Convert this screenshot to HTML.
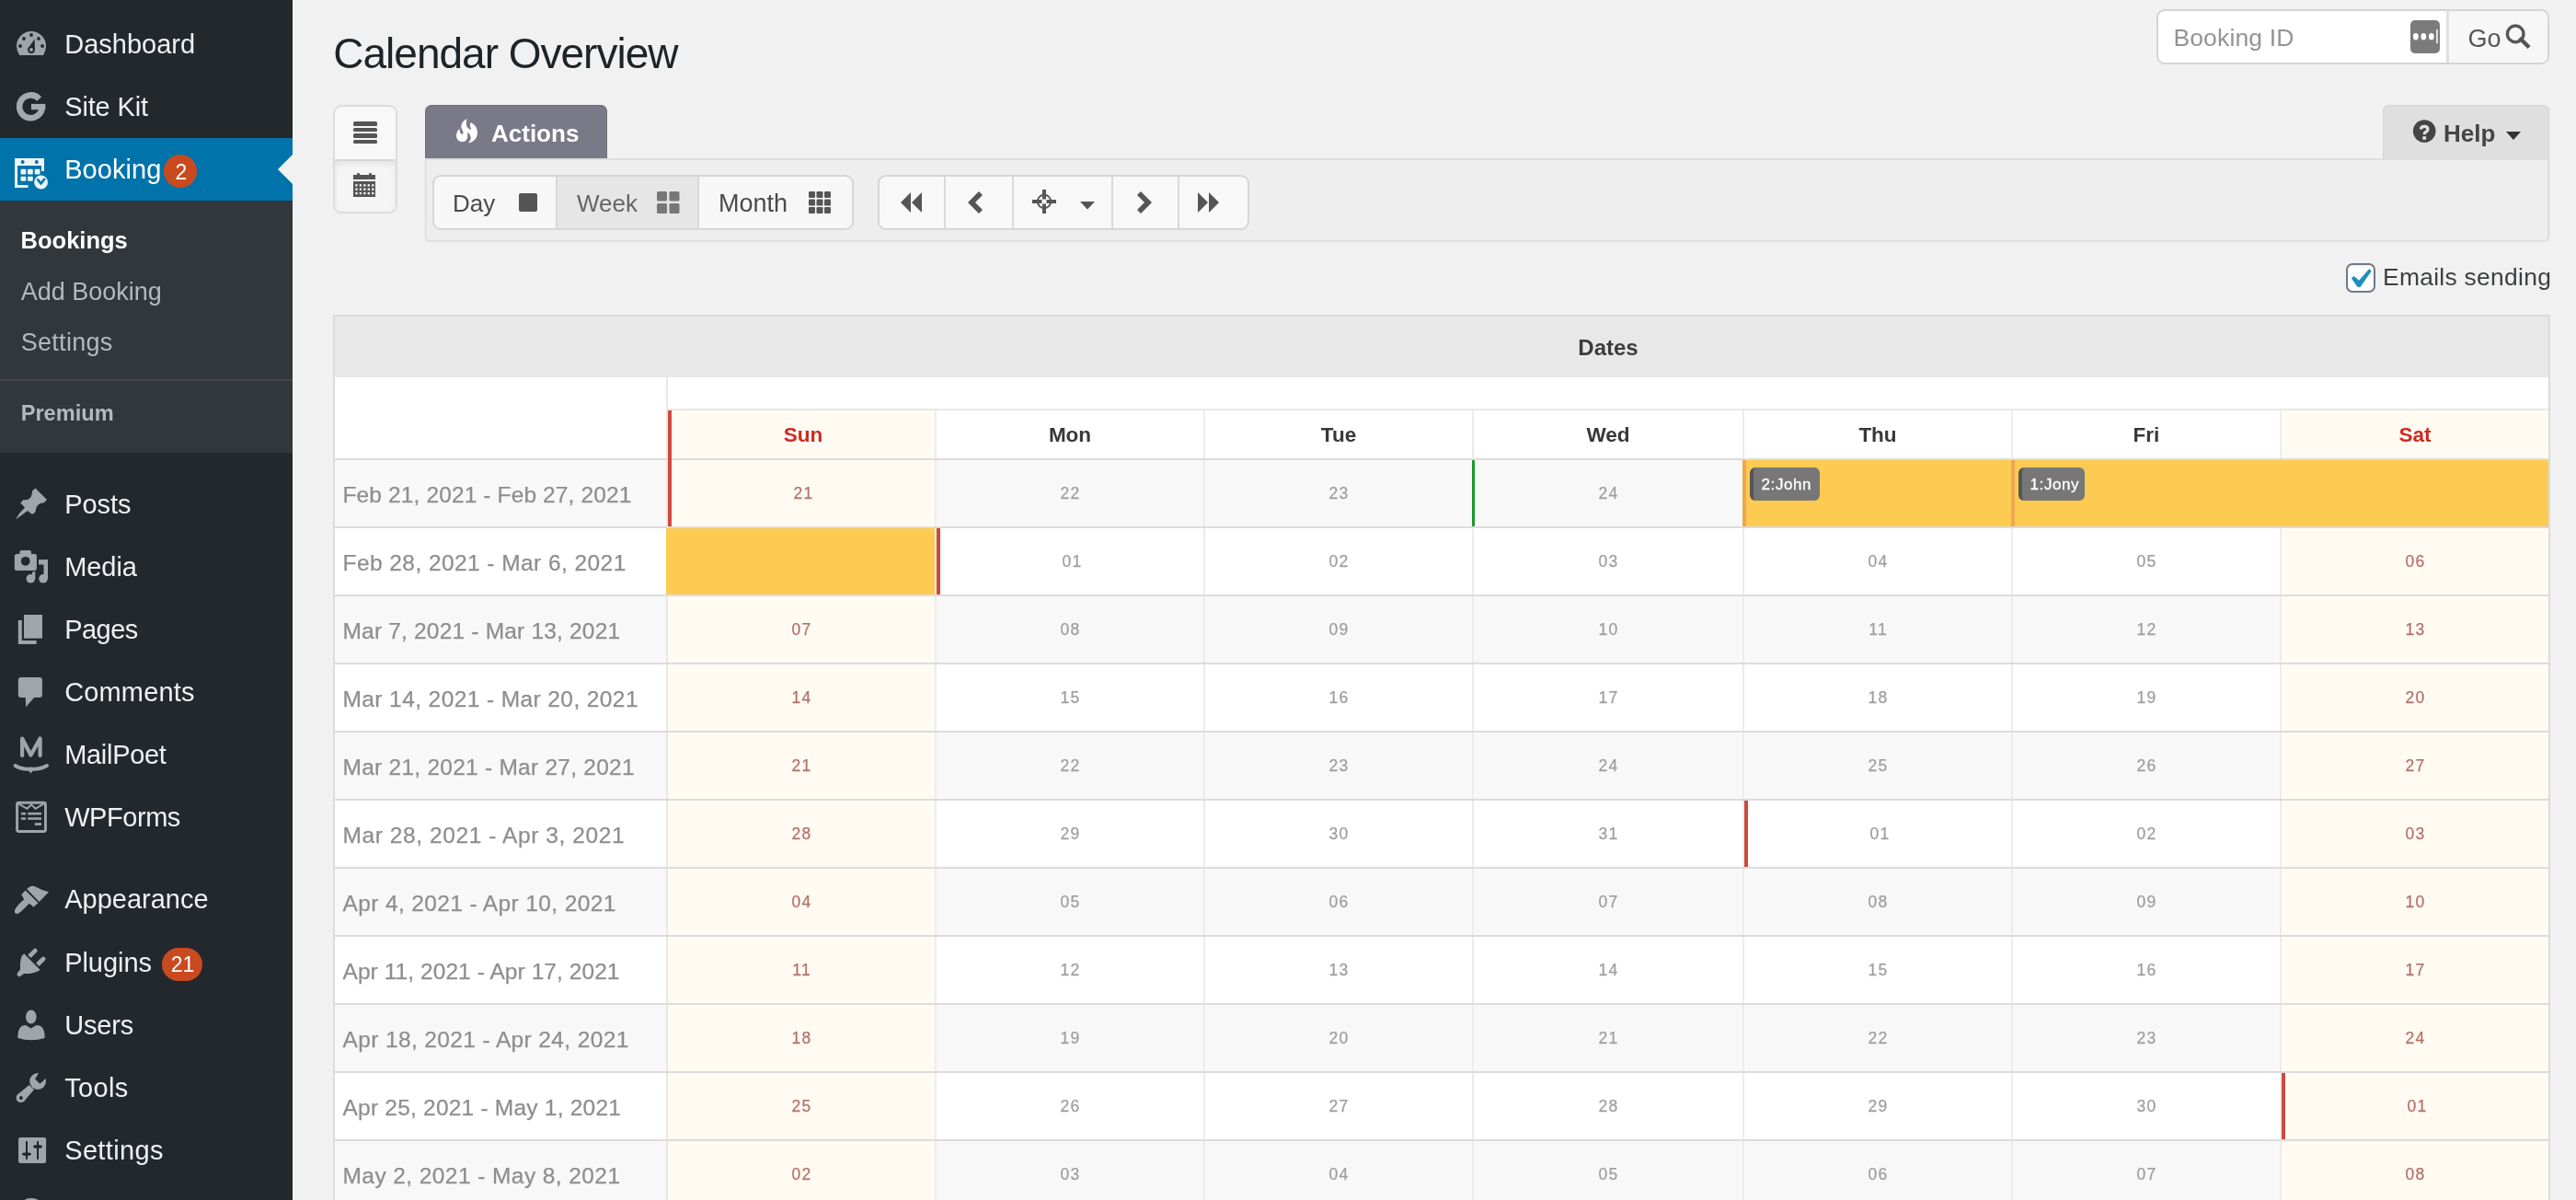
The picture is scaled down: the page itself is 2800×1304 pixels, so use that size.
<!DOCTYPE html>
<html><head><meta charset="utf-8"><style>
html,body{margin:0;padding:0;width:2800px;height:1304px;overflow:hidden;background:#f1f1f1;font-family:"Liberation Sans", sans-serif;}
.r{position:absolute;}
.t{position:absolute;white-space:nowrap;}
</style></head><body><div id="wrap" style="position:absolute;left:0;top:0;width:2800px;height:1304px;will-change:transform">
<div class="r" style="left:0px;top:0px;width:318px;height:1304px;background:#23282d"></div>
<div class="r" style="left:0px;top:150px;width:318px;height:68px;background:#0073aa"></div>
<div class="r" style="left:0px;top:218px;width:318px;height:274px;background:#32373c"></div>
<div class="r" style="left:0px;top:412px;width:318px;height:2px;background:#474545"></div>
<svg class="r" style="left:302px;top:168px" width="16" height="32"><path d="M16 0 L0 16 L16 32 Z" fill="#f1f1f1"/></svg>
<div class="t" style="left:70.2px;top:34.15px;font-size:29px;line-height:29px;color:#f0f0f1;font-weight:400;letter-spacing:0.00px">Dashboard</div>
<div class="t" style="left:70.2px;top:102.15px;font-size:29px;line-height:29px;color:#f0f0f1;font-weight:400;letter-spacing:-0.15px">Site Kit</div>
<div class="t" style="left:70.2px;top:170.15px;font-size:29px;line-height:29px;color:#fff;font-weight:400;letter-spacing:0.05px">Booking</div>
<div class="t" style="left:70.2px;top:534.15px;font-size:29px;line-height:29px;color:#f0f0f1;font-weight:400;letter-spacing:-0.05px">Posts</div>
<div class="t" style="left:70.2px;top:602.15px;font-size:29px;line-height:29px;color:#f0f0f1;font-weight:400;letter-spacing:-0.05px">Media</div>
<div class="t" style="left:70.2px;top:670.15px;font-size:29px;line-height:29px;color:#f0f0f1;font-weight:400;letter-spacing:-0.55px">Pages</div>
<div class="t" style="left:70.2px;top:738.15px;font-size:29px;line-height:29px;color:#f0f0f1;font-weight:400;letter-spacing:0.15px">Comments</div>
<div class="t" style="left:70.2px;top:806.15px;font-size:29px;line-height:29px;color:#f0f0f1;font-weight:400;letter-spacing:-0.30px">MailPoet</div>
<div class="t" style="left:70.2px;top:874.15px;font-size:29px;line-height:29px;color:#f0f0f1;font-weight:400;letter-spacing:-0.45px">WPForms</div>
<div class="t" style="left:70.2px;top:963.15px;font-size:29px;line-height:29px;color:#f0f0f1;font-weight:400;letter-spacing:0.00px">Appearance</div>
<div class="t" style="left:70.2px;top:1031.65px;font-size:29px;line-height:29px;color:#f0f0f1;font-weight:400;letter-spacing:-0.05px">Plugins</div>
<div class="t" style="left:70.2px;top:1099.65px;font-size:29px;line-height:29px;color:#f0f0f1;font-weight:400;letter-spacing:-0.15px">Users</div>
<div class="t" style="left:70.2px;top:1167.65px;font-size:29px;line-height:29px;color:#f0f0f1;font-weight:400;letter-spacing:0.35px">Tools</div>
<div class="t" style="left:70.2px;top:1235.65px;font-size:29px;line-height:29px;color:#f0f0f1;font-weight:400;letter-spacing:0.35px">Settings</div>
<div class="r" style="left:178px;top:168px;width:36px;height:36px;background:#ca4a1f;border-radius:18px"></div>
<div class="t" style="left:178.80px;width:36px;text-align:center;top:175.53px;font-size:23px;line-height:23px;color:#fff;font-weight:400;">2</div>
<div class="r" style="left:176px;top:1030px;width:44px;height:36px;background:#ca4a1f;border-radius:18px"></div>
<div class="t" style="left:176.50px;width:44px;text-align:center;top:1036.73px;font-size:23px;line-height:23px;color:#fff;font-weight:400;">21</div>
<div class="t" style="left:22.6px;top:249.41px;font-size:25.5px;line-height:25.5px;color:#fff;font-weight:700;">Bookings</div>
<div class="t" style="left:22.7px;top:303.54px;font-size:27px;line-height:27px;color:#b4b9be;font-weight:400;">Add Booking</div>
<div class="t" style="left:22.7px;top:359.34px;font-size:27px;line-height:27px;color:#b4b9be;font-weight:400;letter-spacing:0.3px">Settings</div>
<div class="t" style="left:22.7px;top:438.02px;font-size:23.6px;line-height:23.6px;color:#b4b9be;font-weight:700;">Premium</div>
<svg class="r" style="left:18px;top:34px" width="32" height="26" viewBox="0 0 32 26"><path d="M16 0 A16 16 0 0 1 32 16 Q32 21 29 26 L3.2 26 Q0 21 0 16 A16 16 0 0 1 16 0Z" fill="#a0a5aa"/><circle cx="16" cy="4" r="1.9" fill="#23282d"/><circle cx="8" cy="8" r="1.9" fill="#23282d"/><circle cx="24" cy="8" r="1.9" fill="#23282d"/><circle cx="4" cy="16" r="1.9" fill="#23282d"/><circle cx="28" cy="16" r="1.9" fill="#23282d"/><path d="M12.3 19.2 L19.6 8.3 L19.9 20.5 Z" fill="#23282d"/><circle cx="16" cy="20" r="3.9" fill="#23282d"/><circle cx="16" cy="20" r="1.9" fill="#a0a5aa"/></svg>
<svg class="r" style="left:18px;top:100px" width="32" height="32" viewBox="0 0 32 32"><path d="M24.7 7.5 A12.4 12.4 0 1 0 27.9 15.8" fill="none" stroke="#a7aaad" stroke-width="6.6"/><rect x="16" y="12.9" width="15.3" height="6.3" fill="#a7aaad"/></svg>
<svg class="r" style="left:15px;top:171px" width="38" height="36" viewBox="0 0 38 36"><g opacity="0.93"><path d="M1 1 H33 V15 H30 V9 H4 V30 H15.5 V33 H1 Z" fill="#fff"/><circle cx="9.6" cy="5" r="2" fill="#0073aa"/><circle cx="24.8" cy="5" r="2" fill="#0073aa"/><rect x="7.5" y="12.8" width="5.8" height="5.8" rx="1" fill="#fff"/><rect x="15" y="12.8" width="5.8" height="5.8" rx="1" fill="#fff"/><rect x="22.7" y="12.8" width="5.8" height="5.8" rx="1" fill="#fff"/><rect x="7.5" y="20.7" width="5.8" height="5" rx="1" fill="#fff"/><rect x="15" y="20.7" width="5.8" height="5" rx="1" fill="#fff"/><circle cx="29.6" cy="27" r="7.4" fill="#fff"/><path d="M25.5 23.5 L29.5 28.5 L33.8 23" fill="none" stroke="#0073aa" stroke-width="2.6"/></g></svg>
<svg class="r" style="left:0px;top:520px" width="60" height="50" viewBox="0 0 60 50"><path d="M38.5 10.5 L51 23 L47.5 26.5 Q40 26 38.5 35 L39 36 L35 39 L30 35 Q22 41 17 44.5 Q21 37 27 31.5 L22.2 26.5 L25.5 23 Q34 24.5 35 15 L35 13.5 Z" fill="#a0a5aa"/></svg>
<svg class="r" style="left:0px;top:590px" width="60" height="50" viewBox="0 0 60 50"><rect x="15.8" y="11.9" width="24.1" height="18.1" rx="2.5" fill="#a0a5aa"/><rect x="21.4" y="7.9" width="12.6" height="6" rx="2" fill="#a0a5aa"/><circle cx="27.7" cy="19.8" r="4.9" fill="#23282d"/><rect x="47.5" y="18.2" width="4.5" height="21" fill="#a0a5aa"/><rect x="42" y="18.2" width="10" height="5.3" fill="#a0a5aa"/><circle cx="47" cy="38.8" r="4.8" fill="#a0a5aa"/><circle cx="33.3" cy="38.8" r="4.8" fill="#a0a5aa"/><rect x="35" y="31.7" width="3.3" height="7" fill="#a0a5aa"/><path d="M35 31.7 L38.3 31.7 L38.3 30.5 Z" fill="#a0a5aa"/></svg>
<svg class="r" style="left:0px;top:660px" width="60" height="45" viewBox="0 0 60 45"><rect x="26" y="8" width="20" height="25.7" fill="#a0a5aa"/><path d="M19.8 14 L23.8 14 L23.8 36 L39.6 36 L39.6 40 L19.8 40 Z" fill="#a0a5aa"/></svg>
<svg class="r" style="left:0px;top:730px" width="60" height="45" viewBox="0 0 60 45"><rect x="19.8" y="6" width="26.1" height="21.9" rx="3" fill="#a0a5aa"/><path d="M27.7 27 L38 27 L28.2 38.2 Z" fill="#a0a5aa"/></svg>
<svg class="r" style="left:0px;top:790px" width="60" height="60" viewBox="0 0 60 60"><path d="M24.1 31 V12.5 L33.5 30.5 L43.6 12.5 V31" fill="none" stroke="#a0a5aa" stroke-width="4.2" stroke-linecap="round" stroke-linejoin="round"/><path d="M16.5 42 Q24 46.5 33.5 45.5 Q43 46.5 51 42" fill="none" stroke="#a0a5aa" stroke-width="4" stroke-linecap="round"/><path d="M29 44.5 L33.5 50.5 L38 44.5 Z" fill="#a0a5aa"/></svg>
<svg class="r" style="left:10px;top:860px" width="50" height="50" viewBox="0 0 50 50"><rect x="8.55" y="12.25" width="30.9" height="31.3" rx="2" fill="none" stroke="#a0a5aa" stroke-width="2.9"/><path d="M10 13.3 L19.4 18.75 L24 14.4 L28.5 18.75 L37.7 13.3" fill="none" stroke="#a0a5aa" stroke-width="2"/><rect x="12.9" y="22.9" width="5.2" height="2.5" fill="#a0a5aa"/><rect x="20.2" y="22.9" width="14.8" height="2.5" fill="#a0a5aa"/><rect x="12.9" y="28.3" width="5.2" height="2.5" fill="#a0a5aa"/><rect x="20.2" y="28.3" width="14.8" height="2.5" fill="#a0a5aa"/><rect x="27.9" y="34.2" width="7.1" height="2.7" fill="#a0a5aa"/></svg>
<svg class="r" style="left:10px;top:955px" width="50" height="45" viewBox="0 0 50 45"><path d="M19.1 10.9 Q24 6 28.5 8.6 Q36 13 43.1 14.2 L32.6 24.9 Z" fill="#a0a5aa"/><path d="M17.6 12.6 L31.5 26.2 L26.2 30.7 Q23 27 21 27.4 Q14 35 9.4 37.9 Q5 38 6 34 Q9 28 16.1 22.5 Q15 19 13.1 17.2 Z" fill="#a0a5aa"/></svg>
<svg class="r" style="left:10px;top:1025px" width="50" height="45" viewBox="0 0 50 45"><path d="M16.1 11.2 L33.7 28.9 Q27 33.5 16.1 33 L11.2 36.4 Q7.5 35 9 31.9 L12 28.5 Q11 15 16.1 11.2 Z" fill="#a0a5aa"/><path d="M20.2 12.7 L26.5 6.4 A2.4 2.4 0 0 1 29.9 9.8 L23.6 16.1 Z" fill="#a0a5aa"/><path d="M29.1 21.6 L35.4 15.3 A2.4 2.4 0 0 1 38.8 18.7 L32.5 25 Z" fill="#a0a5aa"/></svg>
<svg class="r" style="left:10px;top:1090px" width="50" height="45" viewBox="0 0 50 45"><ellipse cx="23.8" cy="15" rx="5.8" ry="7.4" fill="#a0a5aa"/><path d="M9.4 37.9 Q9 24 18 24 L23.8 27.4 L29.6 24 Q39 24 38.6 37.9 Q23.8 42.5 9.4 37.9 Z" fill="#a0a5aa"/></svg>
<svg class="r" style="left:10px;top:1160px" width="50" height="45" viewBox="0 0 50 45"><circle cx="31.1" cy="15" r="8.9" fill="#a0a5aa"/><path d="M34.5 2 L28.1 12.4 L33.4 17.8 L44 8 Z" fill="#23282d"/><path d="M21.7 19.1 L27 24 L16.1 36.7 L9 29.6 Z" fill="#a0a5aa"/><circle cx="12.6" cy="33.1" r="5" fill="#a0a5aa"/><circle cx="12.9" cy="33" r="1.9" fill="#23282d"/></svg>
<svg class="r" style="left:20px;top:1236px" width="31" height="28" viewBox="0 0 31 28"><rect x="0" y="0" width="30.1" height="28" rx="2.2" fill="#a0a5aa"/><rect x="8" y="4.1" width="1.9" height="19.7" fill="#1b1f23"/><ellipse cx="8.95" cy="18.1" rx="5" ry="1.9" fill="#23282d"/><rect x="20.1" y="4.1" width="1.9" height="19.7" fill="#1b1f23"/><ellipse cx="21" cy="10" rx="4.9" ry="1.9" fill="#23282d"/></svg>
<div class="r" style="left:19px;top:1302px;width:30px;height:30px;border-radius:15px;background:#a0a5aa"></div>
<div class="t" style="left:362.3px;top:35.06px;font-size:46px;line-height:46px;color:#1d2327;font-weight:400;letter-spacing:-1px">Calendar Overview</div>
<div class="r" style="left:362px;top:114px;width:70px;height:118px;background:#f8f8f8;border:2px solid #dcdcdc;border-radius:9px;box-sizing:border-box"></div>
<div class="r" style="left:364px;top:173px;width:66px;height:2px;background:#d8d8d8"></div>
<div class="r" style="left:364px;top:175px;width:66px;height:55px;background:#f5f5f5;box-shadow:inset 0 3px 6px rgba(0,0,0,0.08);border-radius:0 0 7px 7px"></div>
<div class="r" style="left:384px;top:132px;width:26px;height:4.5px;background:#555;border-radius:1.5px"></div>
<div class="r" style="left:384px;top:138.5px;width:26px;height:4.5px;background:#555;border-radius:1.5px"></div>
<div class="r" style="left:384px;top:145px;width:26px;height:4.5px;background:#555;border-radius:1.5px"></div>
<div class="r" style="left:384px;top:151.5px;width:26px;height:4.5px;background:#555;border-radius:1.5px"></div>
<svg class="r" style="left:384px;top:188px" width="24" height="26" viewBox="0 0 24 26"><rect x="0" y="2" width="24" height="5" fill="#555"/><rect x="4" y="0" width="3" height="4" rx="1" fill="#555"/><rect x="17" y="0" width="3" height="4" rx="1" fill="#555"/><rect x="0" y="9" width="24" height="17" fill="#555"/><rect x="2.30" y="12.20" width="2.3" height="2.3" fill="#f5f5f5"/><rect x="2.30" y="16.55" width="2.3" height="2.3" fill="#f5f5f5"/><rect x="2.30" y="20.90" width="2.3" height="2.3" fill="#f5f5f5"/><rect x="6.75" y="12.20" width="2.3" height="2.3" fill="#f5f5f5"/><rect x="6.75" y="16.55" width="2.3" height="2.3" fill="#f5f5f5"/><rect x="6.75" y="20.90" width="2.3" height="2.3" fill="#f5f5f5"/><rect x="11.20" y="12.20" width="2.3" height="2.3" fill="#f5f5f5"/><rect x="11.20" y="16.55" width="2.3" height="2.3" fill="#f5f5f5"/><rect x="11.20" y="20.90" width="2.3" height="2.3" fill="#f5f5f5"/><rect x="15.65" y="12.20" width="2.3" height="2.3" fill="#f5f5f5"/><rect x="15.65" y="16.55" width="2.3" height="2.3" fill="#f5f5f5"/><rect x="15.65" y="20.90" width="2.3" height="2.3" fill="#f5f5f5"/><rect x="20.10" y="12.20" width="2.3" height="2.3" fill="#f5f5f5"/><rect x="20.10" y="16.55" width="2.3" height="2.3" fill="#f5f5f5"/><rect x="20.10" y="20.90" width="2.3" height="2.3" fill="#f5f5f5"/></svg>
<div class="r" style="left:462px;top:114px;width:198px;height:58px;background:#7a7988;border:1px solid #6f6f72;border-bottom:none;border-radius:7px 7px 0 0;box-sizing:border-box"></div>
<svg class="r" style="left:495.9px;top:129px" width="23" height="26.5" viewBox="290 240 610 705"><path d="M607,240 C500,290 430,370 430,470 L385,535 C320,590 290,650 290,730 C290,840 370,905 465,905 C540,905 600,860 612,800 L640,940 C780,920 900,800 900,650 C900,500 820,390 690,345 Z" fill="#fff"/><path d="M600,230 L700,330 C680,420 690,500 725,560 C650,540 590,500 580,420 C570,350 580,290 600,230 Z" fill="#7a7988"/><path d="M385,530 L430,465 C440,560 490,600 490,650 C490,690 440,700 420,670 C395,630 385,590 385,530 Z" fill="#7a7988"/><path d="M618,630 C700,700 720,780 700,840 C680,890 650,920 630,950 L590,950 C610,880 615,800 612,700 Z" fill="#7a7988"/></svg>
<div class="t" style="left:534px;top:132.29px;font-size:26px;line-height:26px;color:#fff;font-weight:700;">Actions</div>
<div class="r" style="left:462px;top:172px;width:2309px;height:89px;background:#eeeeee;border-top:2px solid #dedede;border-left:2px solid #e3e3e3;border-right:2px solid #dcdcdc;box-shadow:0 2px 2px rgba(0,0,0,0.08);border-radius:0 0 5px 5px;box-sizing:border-box"></div>
<div class="r" style="left:470px;top:190px;width:458px;height:60px;background:#f7f7f7;border:2px solid #d6d6d6;border-radius:9px;box-sizing:border-box"></div>
<div class="r" style="left:604px;top:192px;width:156px;height:56px;background:#e6e6e6;border-left:2px solid #d9d9d9;border-right:2px solid #d9d9d9;box-sizing:border-box"></div>
<div class="t" style="left:492px;top:208.19px;font-size:26px;line-height:26px;color:#4a4a4a;font-weight:400;">Day</div>
<div class="r" style="left:564px;top:210px;width:20px;height:20px;background:#555;border-radius:2px"></div>
<div class="t" style="left:627px;top:207.69px;font-size:26px;line-height:26px;color:#666;font-weight:400;">Week</div>
<svg class="r" style="left:714px;top:208px" width="25" height="24" viewBox="0 0 25 24"><rect x="0" y="0" width="11" height="10.5" rx="1.5" fill="#777"/><rect x="13.5" y="0" width="11" height="10.5" rx="1.5" fill="#777"/><rect x="0" y="13" width="11" height="11" rx="1.5" fill="#777"/><rect x="13.5" y="13" width="11" height="11" rx="1.5" fill="#777"/></svg>
<div class="t" style="left:781px;top:207.84px;font-size:27px;line-height:27px;color:#4a4a4a;font-weight:400;">Month</div>
<svg class="r" style="left:879px;top:208px" width="25" height="24" viewBox="0 0 25 24"><rect x="0.0" y="0.0" width="7" height="7" rx="1.2" fill="#555"/><rect x="0.0" y="8.5" width="7" height="7" rx="1.2" fill="#555"/><rect x="0.0" y="17.0" width="7" height="7" rx="1.2" fill="#555"/><rect x="8.5" y="0.0" width="7" height="7" rx="1.2" fill="#555"/><rect x="8.5" y="8.5" width="7" height="7" rx="1.2" fill="#555"/><rect x="8.5" y="17.0" width="7" height="7" rx="1.2" fill="#555"/><rect x="17.0" y="0.0" width="7" height="7" rx="1.2" fill="#555"/><rect x="17.0" y="8.5" width="7" height="7" rx="1.2" fill="#555"/><rect x="17.0" y="17.0" width="7" height="7" rx="1.2" fill="#555"/></svg>
<div class="r" style="left:954px;top:190px;width:404px;height:60px;background:#f8f8f8;border:2px solid #d6d6d6;border-radius:9px;box-sizing:border-box"></div>
<div class="r" style="left:1026px;top:192px;width:2px;height:56px;background:#d9d9d9"></div>
<div class="r" style="left:1100px;top:192px;width:2px;height:56px;background:#d9d9d9"></div>
<div class="r" style="left:1208px;top:192px;width:2px;height:56px;background:#d9d9d9"></div>
<div class="r" style="left:1280px;top:192px;width:2px;height:56px;background:#d9d9d9"></div>
<svg class="r" style="left:979px;top:209px" width="23" height="22" viewBox="0 0 23 22"><path d="M11 0 L0 11 L11 22Z M23 0 L12 11 L23 22Z" fill="#555"/></svg>
<svg class="r" style="left:1052px;top:208px" width="16" height="24" viewBox="0 0 16 24"><path d="M12 0 L16 4 L8 12 L16 20 L12 24 L0 12Z" fill="#555"/></svg>
<svg class="r" style="left:1122px;top:206px" width="26" height="26" viewBox="0 0 26 26"><circle cx="13" cy="13" r="7.2" fill="none" stroke="#555" stroke-width="1.9"/><rect x="0" y="11" width="10.5" height="4" fill="#555"/><rect x="15.5" y="11" width="10.5" height="4" fill="#555"/><rect x="11" y="0" width="4" height="10.5" fill="#555"/><rect x="11" y="15.5" width="4" height="10.5" fill="#555"/></svg>
<svg class="r" style="left:1174px;top:219px" width="16" height="9" viewBox="0 0 16 9"><path d="M0 0 L16 0 L8 8.5Z" fill="#555"/></svg>
<svg class="r" style="left:1236px;top:208px" width="16" height="24" viewBox="0 0 16 24"><path d="M4 0 L0 4 L8 12 L0 20 L4 24 L16 12Z" fill="#555"/></svg>
<svg class="r" style="left:1302px;top:209px" width="23" height="22" viewBox="0 0 23 22"><path d="M0 0 L11 11 L0 22Z M12 0 L23 11 L12 22Z" fill="#555"/></svg>
<div class="r" style="left:2590px;top:114px;width:181px;height:59px;background:#dfdfdf;border:1.5px solid #d5d5d5;border-bottom:none;border-radius:6px 6px 0 0;box-sizing:border-box"></div>
<svg class="r" style="left:2622px;top:130px" width="27" height="26" viewBox="0 0 27 26"><circle cx="13.2" cy="12.5" r="12.3" fill="#444"/><path d="M9.4 10.6 Q9.4 7.3 13.2 7.3 Q17 7.3 17 10.4 Q17 12.2 15 13.2 Q13.2 14 13.2 16.2" fill="none" stroke="#dfdfdf" stroke-width="3.2"/><rect x="11.3" y="18.2" width="3.8" height="3.5" fill="#dfdfdf"/></svg>
<div class="t" style="left:2656px;top:132.39px;font-size:26px;line-height:26px;color:#444;font-weight:700;">Help</div>
<svg class="r" style="left:2724px;top:142px" width="16" height="11" viewBox="0 0 16 11"><path d="M0 1 L16 1 L8 10Z" fill="#333"/></svg>
<div class="r" style="left:2344px;top:10px;width:427px;height:60px;background:#fff;border:2px solid #d4d4d4;border-radius:9px;box-sizing:border-box"></div>
<div class="r" style="left:2659px;top:12px;width:110px;height:56px;background:#f7f7f7;border-left:2px solid #d4d4d4;border-radius:0 7px 7px 0;box-sizing:border-box"></div>
<div class="r" style="left:2659px;top:12px;width:3px;height:56px;background:#e0e0e0"></div>
<div class="t" style="left:2362.4px;top:27.57px;font-size:26.5px;line-height:26.5px;color:#939393;font-weight:400;letter-spacing:0.15px">Booking ID</div>
<div class="r" style="left:2620px;top:22px;width:32px;height:36px;background:#7b7b7b;border-radius:5px"></div>
<svg class="r" style="left:2620px;top:22px" width="32" height="36" viewBox="0 0 32 36"><ellipse cx="5.8" cy="17.8" rx="2.9" ry="3.7" fill="#fff"/><ellipse cx="14.3" cy="17.8" rx="2.9" ry="3.7" fill="#fff"/><ellipse cx="22.8" cy="17.8" rx="2.9" ry="3.7" fill="#fff"/><rect x="28.2" y="10" width="1.5" height="15.2" fill="#fff"/></svg>
<div class="t" style="left:2682.5px;top:28.94px;font-size:27px;line-height:27px;color:#555;font-weight:400;">Go</div>
<svg class="r" style="left:2722px;top:26px" width="30" height="28" viewBox="0 0 30 28"><circle cx="12.2" cy="10.9" r="8.85" fill="none" stroke="#555" stroke-width="3.4"/><path d="M18.2 16.8 L25.5 24" stroke="#555" stroke-width="4.4" stroke-linecap="square"/></svg>
<div class="r" style="left:2550px;top:286px;width:32px;height:32px;background:#fff;border:2px solid #6f7a85;border-radius:7px;box-sizing:border-box;box-shadow:inset 0 2px 2px rgba(0,0,0,0.06)"></div>
<svg class="r" style="left:2550px;top:286px" width="32" height="32" viewBox="0 0 32 32"><path d="M5.8 16.3 L8.6 13.9 L14.2 18.7 L25.1 6.2 L27.7 8.4 L15.5 25.9 L12.4 25.7 Z" fill="#1e8cbe"/></svg>
<div class="t" style="left:2590px;top:287.65px;font-size:26.4px;line-height:26.4px;color:#3d3f41;font-weight:400;letter-spacing:0.3px">Emails sending</div>
<div class="r" style="left:362px;top:342px;width:2410px;height:962px;background:#fff;border:2px solid #dcdcde;border-bottom:none;box-sizing:border-box"></div>
<div class="r" style="left:364px;top:344px;width:2406px;height:66px;background:#e8e8e8"></div>
<div class="t" style="left:1648.00px;width:200px;text-align:center;top:365.68px;font-size:24px;line-height:24px;color:#3c3c3c;font-weight:700;">Dates</div>
<div class="r" style="left:726px;top:444px;width:2044px;height:2px;background:#e8e8e8"></div>
<div class="r" style="left:364px;top:500px;width:2406px;height:72px;background:#f8f8f8"></div>
<div class="r" style="left:364px;top:574px;width:2406px;height:72px;background:#ffffff"></div>
<div class="r" style="left:364px;top:648px;width:2406px;height:72px;background:#f8f8f8"></div>
<div class="r" style="left:364px;top:722px;width:2406px;height:72px;background:#ffffff"></div>
<div class="r" style="left:364px;top:796px;width:2406px;height:72px;background:#f8f8f8"></div>
<div class="r" style="left:364px;top:870px;width:2406px;height:72px;background:#ffffff"></div>
<div class="r" style="left:364px;top:944px;width:2406px;height:72px;background:#f8f8f8"></div>
<div class="r" style="left:364px;top:1018px;width:2406px;height:72px;background:#ffffff"></div>
<div class="r" style="left:364px;top:1092px;width:2406px;height:72px;background:#f8f8f8"></div>
<div class="r" style="left:364px;top:1166px;width:2406px;height:72px;background:#ffffff"></div>
<div class="r" style="left:364px;top:1240px;width:2406px;height:72px;background:#f8f8f8"></div>
<div class="r" style="left:364px;top:1314px;width:2406px;height:72px;background:#ffffff"></div>
<div class="r" style="left:726px;top:446px;width:290px;height:858px;background:#fffbf3"></div>
<div class="r" style="left:2480px;top:446px;width:290px;height:858px;background:#fffbf3"></div>
<div class="r" style="left:724px;top:410px;width:2px;height:894px;background:#e8e8e8"></div>
<div class="r" style="left:1016px;top:446px;width:2px;height:858px;background:#ececec"></div>
<div class="r" style="left:1308px;top:446px;width:2px;height:858px;background:#ececec"></div>
<div class="r" style="left:1600px;top:446px;width:2px;height:858px;background:#ececec"></div>
<div class="r" style="left:1894px;top:446px;width:2px;height:858px;background:#ececec"></div>
<div class="r" style="left:2186px;top:446px;width:2px;height:858px;background:#ececec"></div>
<div class="r" style="left:2478px;top:446px;width:2px;height:858px;background:#ececec"></div>
<div class="r" style="left:364px;top:498px;width:2406px;height:2px;background:#dcdcdc"></div>
<div class="r" style="left:364px;top:572px;width:2406px;height:2px;background:#dcdcdc"></div>
<div class="r" style="left:364px;top:646px;width:2406px;height:2px;background:#dcdcdc"></div>
<div class="r" style="left:364px;top:720px;width:2406px;height:2px;background:#dcdcdc"></div>
<div class="r" style="left:364px;top:794px;width:2406px;height:2px;background:#dcdcdc"></div>
<div class="r" style="left:364px;top:868px;width:2406px;height:2px;background:#dcdcdc"></div>
<div class="r" style="left:364px;top:942px;width:2406px;height:2px;background:#dcdcdc"></div>
<div class="r" style="left:364px;top:1016px;width:2406px;height:2px;background:#dcdcdc"></div>
<div class="r" style="left:364px;top:1090px;width:2406px;height:2px;background:#dcdcdc"></div>
<div class="r" style="left:364px;top:1164px;width:2406px;height:2px;background:#dcdcdc"></div>
<div class="r" style="left:364px;top:1238px;width:2406px;height:2px;background:#dcdcdc"></div>
<div class="r" style="left:364px;top:1312px;width:2406px;height:2px;background:#dcdcdc"></div>
<div class="t" style="left:773.00px;width:200px;text-align:center;top:461.95px;font-size:22.5px;line-height:22.5px;color:#cb2b21;font-weight:700;">Sun</div>
<div class="t" style="left:1063.00px;width:200px;text-align:center;top:461.95px;font-size:22.5px;line-height:22.5px;color:#383838;font-weight:700;">Mon</div>
<div class="t" style="left:1355.00px;width:200px;text-align:center;top:461.95px;font-size:22.5px;line-height:22.5px;color:#383838;font-weight:700;">Tue</div>
<div class="t" style="left:1648.00px;width:200px;text-align:center;top:461.95px;font-size:22.5px;line-height:22.5px;color:#383838;font-weight:700;">Wed</div>
<div class="t" style="left:1941.00px;width:200px;text-align:center;top:461.95px;font-size:22.5px;line-height:22.5px;color:#383838;font-weight:700;">Thu</div>
<div class="t" style="left:2233.00px;width:200px;text-align:center;top:461.95px;font-size:22.5px;line-height:22.5px;color:#383838;font-weight:700;">Fri</div>
<div class="t" style="left:2525.00px;width:200px;text-align:center;top:461.95px;font-size:22.5px;line-height:22.5px;color:#cb2b21;font-weight:700;">Sat</div>
<div class="t" style="left:372.5px;top:526.06px;font-size:24.5px;line-height:24.5px;color:#8e8e8e;font-weight:400;letter-spacing:0.127px;-webkit-text-stroke:0.25px #8e8e8e">Feb 21, 2021 - Feb 27, 2021</div>
<div class="t" style="left:823.60px;width:100px;text-align:center;top:527.89px;font-size:17.5px;line-height:17.5px;color:#b5716a;font-weight:400;letter-spacing:1.3px;-webkit-text-stroke:0.25px #b5716a">21</div>
<div class="t" style="left:1113.60px;width:100px;text-align:center;top:527.89px;font-size:17.5px;line-height:17.5px;color:#9e9e9e;font-weight:400;letter-spacing:1.3px;-webkit-text-stroke:0.25px #9e9e9e">22</div>
<div class="t" style="left:1405.60px;width:100px;text-align:center;top:527.89px;font-size:17.5px;line-height:17.5px;color:#9e9e9e;font-weight:400;letter-spacing:1.3px;-webkit-text-stroke:0.25px #9e9e9e">23</div>
<div class="t" style="left:1698.60px;width:100px;text-align:center;top:527.89px;font-size:17.5px;line-height:17.5px;color:#9e9e9e;font-weight:400;letter-spacing:1.3px;-webkit-text-stroke:0.25px #9e9e9e">24</div>
<div class="t" style="left:1991.60px;width:100px;text-align:center;top:527.89px;font-size:17.5px;line-height:17.5px;color:#9e9e9e;font-weight:400;letter-spacing:1.3px;-webkit-text-stroke:0.25px #9e9e9e">25</div>
<div class="t" style="left:2283.60px;width:100px;text-align:center;top:527.89px;font-size:17.5px;line-height:17.5px;color:#9e9e9e;font-weight:400;letter-spacing:1.3px;-webkit-text-stroke:0.25px #9e9e9e">26</div>
<div class="t" style="left:2575.60px;width:100px;text-align:center;top:527.89px;font-size:17.5px;line-height:17.5px;color:#b5716a;font-weight:400;letter-spacing:1.3px;-webkit-text-stroke:0.25px #b5716a">27</div>
<div class="t" style="left:372.5px;top:600.06px;font-size:24.5px;line-height:24.5px;color:#8e8e8e;font-weight:400;letter-spacing:0.436px;-webkit-text-stroke:0.25px #8e8e8e">Feb 28, 2021 - Mar 6, 2021</div>
<div class="t" style="left:821.60px;width:100px;text-align:center;top:601.89px;font-size:17.5px;line-height:17.5px;color:#b5716a;font-weight:400;letter-spacing:1.3px;-webkit-text-stroke:0.25px #b5716a">28</div>
<div class="t" style="left:1115.60px;width:100px;text-align:center;top:601.89px;font-size:17.5px;line-height:17.5px;color:#9e9e9e;font-weight:400;letter-spacing:1.3px;-webkit-text-stroke:0.25px #9e9e9e">01</div>
<div class="t" style="left:1405.60px;width:100px;text-align:center;top:601.89px;font-size:17.5px;line-height:17.5px;color:#9e9e9e;font-weight:400;letter-spacing:1.3px;-webkit-text-stroke:0.25px #9e9e9e">02</div>
<div class="t" style="left:1698.60px;width:100px;text-align:center;top:601.89px;font-size:17.5px;line-height:17.5px;color:#9e9e9e;font-weight:400;letter-spacing:1.3px;-webkit-text-stroke:0.25px #9e9e9e">03</div>
<div class="t" style="left:1991.60px;width:100px;text-align:center;top:601.89px;font-size:17.5px;line-height:17.5px;color:#9e9e9e;font-weight:400;letter-spacing:1.3px;-webkit-text-stroke:0.25px #9e9e9e">04</div>
<div class="t" style="left:2283.60px;width:100px;text-align:center;top:601.89px;font-size:17.5px;line-height:17.5px;color:#9e9e9e;font-weight:400;letter-spacing:1.3px;-webkit-text-stroke:0.25px #9e9e9e">05</div>
<div class="t" style="left:2575.60px;width:100px;text-align:center;top:601.89px;font-size:17.5px;line-height:17.5px;color:#b5716a;font-weight:400;letter-spacing:1.3px;-webkit-text-stroke:0.25px #b5716a">06</div>
<div class="t" style="left:372.5px;top:674.06px;font-size:24.5px;line-height:24.5px;color:#8e8e8e;font-weight:400;letter-spacing:0.188px;-webkit-text-stroke:0.25px #8e8e8e">Mar 7, 2021 - Mar 13, 2021</div>
<div class="t" style="left:821.60px;width:100px;text-align:center;top:675.89px;font-size:17.5px;line-height:17.5px;color:#b5716a;font-weight:400;letter-spacing:1.3px;-webkit-text-stroke:0.25px #b5716a">07</div>
<div class="t" style="left:1113.60px;width:100px;text-align:center;top:675.89px;font-size:17.5px;line-height:17.5px;color:#9e9e9e;font-weight:400;letter-spacing:1.3px;-webkit-text-stroke:0.25px #9e9e9e">08</div>
<div class="t" style="left:1405.60px;width:100px;text-align:center;top:675.89px;font-size:17.5px;line-height:17.5px;color:#9e9e9e;font-weight:400;letter-spacing:1.3px;-webkit-text-stroke:0.25px #9e9e9e">09</div>
<div class="t" style="left:1698.60px;width:100px;text-align:center;top:675.89px;font-size:17.5px;line-height:17.5px;color:#9e9e9e;font-weight:400;letter-spacing:1.3px;-webkit-text-stroke:0.25px #9e9e9e">10</div>
<div class="t" style="left:1991.60px;width:100px;text-align:center;top:675.89px;font-size:17.5px;line-height:17.5px;color:#9e9e9e;font-weight:400;letter-spacing:1.3px;-webkit-text-stroke:0.25px #9e9e9e">11</div>
<div class="t" style="left:2283.60px;width:100px;text-align:center;top:675.89px;font-size:17.5px;line-height:17.5px;color:#9e9e9e;font-weight:400;letter-spacing:1.3px;-webkit-text-stroke:0.25px #9e9e9e">12</div>
<div class="t" style="left:2575.60px;width:100px;text-align:center;top:675.89px;font-size:17.5px;line-height:17.5px;color:#b5716a;font-weight:400;letter-spacing:1.3px;-webkit-text-stroke:0.25px #b5716a">13</div>
<div class="t" style="left:372.5px;top:748.06px;font-size:24.5px;line-height:24.5px;color:#8e8e8e;font-weight:400;letter-spacing:0.404px;-webkit-text-stroke:0.25px #8e8e8e">Mar 14, 2021 - Mar 20, 2021</div>
<div class="t" style="left:821.60px;width:100px;text-align:center;top:749.89px;font-size:17.5px;line-height:17.5px;color:#b5716a;font-weight:400;letter-spacing:1.3px;-webkit-text-stroke:0.25px #b5716a">14</div>
<div class="t" style="left:1113.60px;width:100px;text-align:center;top:749.89px;font-size:17.5px;line-height:17.5px;color:#9e9e9e;font-weight:400;letter-spacing:1.3px;-webkit-text-stroke:0.25px #9e9e9e">15</div>
<div class="t" style="left:1405.60px;width:100px;text-align:center;top:749.89px;font-size:17.5px;line-height:17.5px;color:#9e9e9e;font-weight:400;letter-spacing:1.3px;-webkit-text-stroke:0.25px #9e9e9e">16</div>
<div class="t" style="left:1698.60px;width:100px;text-align:center;top:749.89px;font-size:17.5px;line-height:17.5px;color:#9e9e9e;font-weight:400;letter-spacing:1.3px;-webkit-text-stroke:0.25px #9e9e9e">17</div>
<div class="t" style="left:1991.60px;width:100px;text-align:center;top:749.89px;font-size:17.5px;line-height:17.5px;color:#9e9e9e;font-weight:400;letter-spacing:1.3px;-webkit-text-stroke:0.25px #9e9e9e">18</div>
<div class="t" style="left:2283.60px;width:100px;text-align:center;top:749.89px;font-size:17.5px;line-height:17.5px;color:#9e9e9e;font-weight:400;letter-spacing:1.3px;-webkit-text-stroke:0.25px #9e9e9e">19</div>
<div class="t" style="left:2575.60px;width:100px;text-align:center;top:749.89px;font-size:17.5px;line-height:17.5px;color:#b5716a;font-weight:400;letter-spacing:1.3px;-webkit-text-stroke:0.25px #b5716a">20</div>
<div class="t" style="left:372.5px;top:822.06px;font-size:24.5px;line-height:24.5px;color:#8e8e8e;font-weight:400;letter-spacing:0.254px;-webkit-text-stroke:0.25px #8e8e8e">Mar 21, 2021 - Mar 27, 2021</div>
<div class="t" style="left:821.60px;width:100px;text-align:center;top:823.89px;font-size:17.5px;line-height:17.5px;color:#b5716a;font-weight:400;letter-spacing:1.3px;-webkit-text-stroke:0.25px #b5716a">21</div>
<div class="t" style="left:1113.60px;width:100px;text-align:center;top:823.89px;font-size:17.5px;line-height:17.5px;color:#9e9e9e;font-weight:400;letter-spacing:1.3px;-webkit-text-stroke:0.25px #9e9e9e">22</div>
<div class="t" style="left:1405.60px;width:100px;text-align:center;top:823.89px;font-size:17.5px;line-height:17.5px;color:#9e9e9e;font-weight:400;letter-spacing:1.3px;-webkit-text-stroke:0.25px #9e9e9e">23</div>
<div class="t" style="left:1698.60px;width:100px;text-align:center;top:823.89px;font-size:17.5px;line-height:17.5px;color:#9e9e9e;font-weight:400;letter-spacing:1.3px;-webkit-text-stroke:0.25px #9e9e9e">24</div>
<div class="t" style="left:1991.60px;width:100px;text-align:center;top:823.89px;font-size:17.5px;line-height:17.5px;color:#9e9e9e;font-weight:400;letter-spacing:1.3px;-webkit-text-stroke:0.25px #9e9e9e">25</div>
<div class="t" style="left:2283.60px;width:100px;text-align:center;top:823.89px;font-size:17.5px;line-height:17.5px;color:#9e9e9e;font-weight:400;letter-spacing:1.3px;-webkit-text-stroke:0.25px #9e9e9e">26</div>
<div class="t" style="left:2575.60px;width:100px;text-align:center;top:823.89px;font-size:17.5px;line-height:17.5px;color:#b5716a;font-weight:400;letter-spacing:1.3px;-webkit-text-stroke:0.25px #b5716a">27</div>
<div class="t" style="left:372.5px;top:896.06px;font-size:24.5px;line-height:24.5px;color:#8e8e8e;font-weight:400;letter-spacing:0.584px;-webkit-text-stroke:0.25px #8e8e8e">Mar 28, 2021 - Apr 3, 2021</div>
<div class="t" style="left:821.60px;width:100px;text-align:center;top:897.89px;font-size:17.5px;line-height:17.5px;color:#b5716a;font-weight:400;letter-spacing:1.3px;-webkit-text-stroke:0.25px #b5716a">28</div>
<div class="t" style="left:1113.60px;width:100px;text-align:center;top:897.89px;font-size:17.5px;line-height:17.5px;color:#9e9e9e;font-weight:400;letter-spacing:1.3px;-webkit-text-stroke:0.25px #9e9e9e">29</div>
<div class="t" style="left:1405.60px;width:100px;text-align:center;top:897.89px;font-size:17.5px;line-height:17.5px;color:#9e9e9e;font-weight:400;letter-spacing:1.3px;-webkit-text-stroke:0.25px #9e9e9e">30</div>
<div class="t" style="left:1698.60px;width:100px;text-align:center;top:897.89px;font-size:17.5px;line-height:17.5px;color:#9e9e9e;font-weight:400;letter-spacing:1.3px;-webkit-text-stroke:0.25px #9e9e9e">31</div>
<div class="t" style="left:1993.60px;width:100px;text-align:center;top:897.89px;font-size:17.5px;line-height:17.5px;color:#9e9e9e;font-weight:400;letter-spacing:1.3px;-webkit-text-stroke:0.25px #9e9e9e">01</div>
<div class="t" style="left:2283.60px;width:100px;text-align:center;top:897.89px;font-size:17.5px;line-height:17.5px;color:#9e9e9e;font-weight:400;letter-spacing:1.3px;-webkit-text-stroke:0.25px #9e9e9e">02</div>
<div class="t" style="left:2575.60px;width:100px;text-align:center;top:897.89px;font-size:17.5px;line-height:17.5px;color:#b5716a;font-weight:400;letter-spacing:1.3px;-webkit-text-stroke:0.25px #b5716a">03</div>
<div class="t" style="left:372.5px;top:970.06px;font-size:24.5px;line-height:24.5px;color:#8e8e8e;font-weight:400;letter-spacing:0.376px;-webkit-text-stroke:0.25px #8e8e8e">Apr 4, 2021 - Apr 10, 2021</div>
<div class="t" style="left:821.60px;width:100px;text-align:center;top:971.89px;font-size:17.5px;line-height:17.5px;color:#b5716a;font-weight:400;letter-spacing:1.3px;-webkit-text-stroke:0.25px #b5716a">04</div>
<div class="t" style="left:1113.60px;width:100px;text-align:center;top:971.89px;font-size:17.5px;line-height:17.5px;color:#9e9e9e;font-weight:400;letter-spacing:1.3px;-webkit-text-stroke:0.25px #9e9e9e">05</div>
<div class="t" style="left:1405.60px;width:100px;text-align:center;top:971.89px;font-size:17.5px;line-height:17.5px;color:#9e9e9e;font-weight:400;letter-spacing:1.3px;-webkit-text-stroke:0.25px #9e9e9e">06</div>
<div class="t" style="left:1698.60px;width:100px;text-align:center;top:971.89px;font-size:17.5px;line-height:17.5px;color:#9e9e9e;font-weight:400;letter-spacing:1.3px;-webkit-text-stroke:0.25px #9e9e9e">07</div>
<div class="t" style="left:1991.60px;width:100px;text-align:center;top:971.89px;font-size:17.5px;line-height:17.5px;color:#9e9e9e;font-weight:400;letter-spacing:1.3px;-webkit-text-stroke:0.25px #9e9e9e">08</div>
<div class="t" style="left:2283.60px;width:100px;text-align:center;top:971.89px;font-size:17.5px;line-height:17.5px;color:#9e9e9e;font-weight:400;letter-spacing:1.3px;-webkit-text-stroke:0.25px #9e9e9e">09</div>
<div class="t" style="left:2575.60px;width:100px;text-align:center;top:971.89px;font-size:17.5px;line-height:17.5px;color:#b5716a;font-weight:400;letter-spacing:1.3px;-webkit-text-stroke:0.25px #b5716a">10</div>
<div class="t" style="left:372.5px;top:1044.06px;font-size:24.5px;line-height:24.5px;color:#8e8e8e;font-weight:400;letter-spacing:0.069px;-webkit-text-stroke:0.25px #8e8e8e">Apr 11, 2021 - Apr 17, 2021</div>
<div class="t" style="left:821.60px;width:100px;text-align:center;top:1045.89px;font-size:17.5px;line-height:17.5px;color:#b5716a;font-weight:400;letter-spacing:1.3px;-webkit-text-stroke:0.25px #b5716a">11</div>
<div class="t" style="left:1113.60px;width:100px;text-align:center;top:1045.89px;font-size:17.5px;line-height:17.5px;color:#9e9e9e;font-weight:400;letter-spacing:1.3px;-webkit-text-stroke:0.25px #9e9e9e">12</div>
<div class="t" style="left:1405.60px;width:100px;text-align:center;top:1045.89px;font-size:17.5px;line-height:17.5px;color:#9e9e9e;font-weight:400;letter-spacing:1.3px;-webkit-text-stroke:0.25px #9e9e9e">13</div>
<div class="t" style="left:1698.60px;width:100px;text-align:center;top:1045.89px;font-size:17.5px;line-height:17.5px;color:#9e9e9e;font-weight:400;letter-spacing:1.3px;-webkit-text-stroke:0.25px #9e9e9e">14</div>
<div class="t" style="left:1991.60px;width:100px;text-align:center;top:1045.89px;font-size:17.5px;line-height:17.5px;color:#9e9e9e;font-weight:400;letter-spacing:1.3px;-webkit-text-stroke:0.25px #9e9e9e">15</div>
<div class="t" style="left:2283.60px;width:100px;text-align:center;top:1045.89px;font-size:17.5px;line-height:17.5px;color:#9e9e9e;font-weight:400;letter-spacing:1.3px;-webkit-text-stroke:0.25px #9e9e9e">16</div>
<div class="t" style="left:2575.60px;width:100px;text-align:center;top:1045.89px;font-size:17.5px;line-height:17.5px;color:#b5716a;font-weight:400;letter-spacing:1.3px;-webkit-text-stroke:0.25px #b5716a">17</div>
<div class="t" style="left:372.5px;top:1118.06px;font-size:24.5px;line-height:24.5px;color:#8e8e8e;font-weight:400;letter-spacing:0.377px;-webkit-text-stroke:0.25px #8e8e8e">Apr 18, 2021 - Apr 24, 2021</div>
<div class="t" style="left:821.60px;width:100px;text-align:center;top:1119.89px;font-size:17.5px;line-height:17.5px;color:#b5716a;font-weight:400;letter-spacing:1.3px;-webkit-text-stroke:0.25px #b5716a">18</div>
<div class="t" style="left:1113.60px;width:100px;text-align:center;top:1119.89px;font-size:17.5px;line-height:17.5px;color:#9e9e9e;font-weight:400;letter-spacing:1.3px;-webkit-text-stroke:0.25px #9e9e9e">19</div>
<div class="t" style="left:1405.60px;width:100px;text-align:center;top:1119.89px;font-size:17.5px;line-height:17.5px;color:#9e9e9e;font-weight:400;letter-spacing:1.3px;-webkit-text-stroke:0.25px #9e9e9e">20</div>
<div class="t" style="left:1698.60px;width:100px;text-align:center;top:1119.89px;font-size:17.5px;line-height:17.5px;color:#9e9e9e;font-weight:400;letter-spacing:1.3px;-webkit-text-stroke:0.25px #9e9e9e">21</div>
<div class="t" style="left:1991.60px;width:100px;text-align:center;top:1119.89px;font-size:17.5px;line-height:17.5px;color:#9e9e9e;font-weight:400;letter-spacing:1.3px;-webkit-text-stroke:0.25px #9e9e9e">22</div>
<div class="t" style="left:2283.60px;width:100px;text-align:center;top:1119.89px;font-size:17.5px;line-height:17.5px;color:#9e9e9e;font-weight:400;letter-spacing:1.3px;-webkit-text-stroke:0.25px #9e9e9e">23</div>
<div class="t" style="left:2575.60px;width:100px;text-align:center;top:1119.89px;font-size:17.5px;line-height:17.5px;color:#b5716a;font-weight:400;letter-spacing:1.3px;-webkit-text-stroke:0.25px #b5716a">24</div>
<div class="t" style="left:372.5px;top:1192.06px;font-size:24.5px;line-height:24.5px;color:#8e8e8e;font-weight:400;letter-spacing:0.22px;-webkit-text-stroke:0.25px #8e8e8e">Apr 25, 2021 - May 1, 2021</div>
<div class="t" style="left:821.60px;width:100px;text-align:center;top:1193.89px;font-size:17.5px;line-height:17.5px;color:#b5716a;font-weight:400;letter-spacing:1.3px;-webkit-text-stroke:0.25px #b5716a">25</div>
<div class="t" style="left:1113.60px;width:100px;text-align:center;top:1193.89px;font-size:17.5px;line-height:17.5px;color:#9e9e9e;font-weight:400;letter-spacing:1.3px;-webkit-text-stroke:0.25px #9e9e9e">26</div>
<div class="t" style="left:1405.60px;width:100px;text-align:center;top:1193.89px;font-size:17.5px;line-height:17.5px;color:#9e9e9e;font-weight:400;letter-spacing:1.3px;-webkit-text-stroke:0.25px #9e9e9e">27</div>
<div class="t" style="left:1698.60px;width:100px;text-align:center;top:1193.89px;font-size:17.5px;line-height:17.5px;color:#9e9e9e;font-weight:400;letter-spacing:1.3px;-webkit-text-stroke:0.25px #9e9e9e">28</div>
<div class="t" style="left:1991.60px;width:100px;text-align:center;top:1193.89px;font-size:17.5px;line-height:17.5px;color:#9e9e9e;font-weight:400;letter-spacing:1.3px;-webkit-text-stroke:0.25px #9e9e9e">29</div>
<div class="t" style="left:2283.60px;width:100px;text-align:center;top:1193.89px;font-size:17.5px;line-height:17.5px;color:#9e9e9e;font-weight:400;letter-spacing:1.3px;-webkit-text-stroke:0.25px #9e9e9e">30</div>
<div class="t" style="left:2577.60px;width:100px;text-align:center;top:1193.89px;font-size:17.5px;line-height:17.5px;color:#b5716a;font-weight:400;letter-spacing:1.3px;-webkit-text-stroke:0.25px #b5716a">01</div>
<div class="t" style="left:372.5px;top:1266.06px;font-size:24.5px;line-height:24.5px;color:#8e8e8e;font-weight:400;letter-spacing:0.421px;-webkit-text-stroke:0.25px #8e8e8e">May 2, 2021 - May 8, 2021</div>
<div class="t" style="left:821.60px;width:100px;text-align:center;top:1267.89px;font-size:17.5px;line-height:17.5px;color:#b5716a;font-weight:400;letter-spacing:1.3px;-webkit-text-stroke:0.25px #b5716a">02</div>
<div class="t" style="left:1113.60px;width:100px;text-align:center;top:1267.89px;font-size:17.5px;line-height:17.5px;color:#9e9e9e;font-weight:400;letter-spacing:1.3px;-webkit-text-stroke:0.25px #9e9e9e">03</div>
<div class="t" style="left:1405.60px;width:100px;text-align:center;top:1267.89px;font-size:17.5px;line-height:17.5px;color:#9e9e9e;font-weight:400;letter-spacing:1.3px;-webkit-text-stroke:0.25px #9e9e9e">04</div>
<div class="t" style="left:1698.60px;width:100px;text-align:center;top:1267.89px;font-size:17.5px;line-height:17.5px;color:#9e9e9e;font-weight:400;letter-spacing:1.3px;-webkit-text-stroke:0.25px #9e9e9e">05</div>
<div class="t" style="left:1991.60px;width:100px;text-align:center;top:1267.89px;font-size:17.5px;line-height:17.5px;color:#9e9e9e;font-weight:400;letter-spacing:1.3px;-webkit-text-stroke:0.25px #9e9e9e">06</div>
<div class="t" style="left:2283.60px;width:100px;text-align:center;top:1267.89px;font-size:17.5px;line-height:17.5px;color:#9e9e9e;font-weight:400;letter-spacing:1.3px;-webkit-text-stroke:0.25px #9e9e9e">07</div>
<div class="t" style="left:2575.60px;width:100px;text-align:center;top:1267.89px;font-size:17.5px;line-height:17.5px;color:#b5716a;font-weight:400;letter-spacing:1.3px;-webkit-text-stroke:0.25px #b5716a">08</div>
<div class="t" style="left:372.5px;top:1340.06px;font-size:24.5px;line-height:24.5px;color:#8e8e8e;font-weight:400;letter-spacing:0.3px;-webkit-text-stroke:0.25px #8e8e8e">May 9, 2021 - May 15, 2021</div>
<div class="t" style="left:821.60px;width:100px;text-align:center;top:1341.89px;font-size:17.5px;line-height:17.5px;color:#b5716a;font-weight:400;letter-spacing:1.3px;-webkit-text-stroke:0.25px #b5716a">09</div>
<div class="t" style="left:1113.60px;width:100px;text-align:center;top:1341.89px;font-size:17.5px;line-height:17.5px;color:#9e9e9e;font-weight:400;letter-spacing:1.3px;-webkit-text-stroke:0.25px #9e9e9e">10</div>
<div class="t" style="left:1405.60px;width:100px;text-align:center;top:1341.89px;font-size:17.5px;line-height:17.5px;color:#9e9e9e;font-weight:400;letter-spacing:1.3px;-webkit-text-stroke:0.25px #9e9e9e">11</div>
<div class="t" style="left:1698.60px;width:100px;text-align:center;top:1341.89px;font-size:17.5px;line-height:17.5px;color:#9e9e9e;font-weight:400;letter-spacing:1.3px;-webkit-text-stroke:0.25px #9e9e9e">12</div>
<div class="t" style="left:1991.60px;width:100px;text-align:center;top:1341.89px;font-size:17.5px;line-height:17.5px;color:#9e9e9e;font-weight:400;letter-spacing:1.3px;-webkit-text-stroke:0.25px #9e9e9e">13</div>
<div class="t" style="left:2283.60px;width:100px;text-align:center;top:1341.89px;font-size:17.5px;line-height:17.5px;color:#9e9e9e;font-weight:400;letter-spacing:1.3px;-webkit-text-stroke:0.25px #9e9e9e">14</div>
<div class="t" style="left:2575.60px;width:100px;text-align:center;top:1341.89px;font-size:17.5px;line-height:17.5px;color:#b5716a;font-weight:400;letter-spacing:1.3px;-webkit-text-stroke:0.25px #b5716a">15</div>
<div class="r" style="left:1894px;top:500px;width:876px;height:72px;background:#fdcb51"></div>
<div class="r" style="left:724px;top:574px;width:292px;height:72px;background:#fdcb51"></div>
<div class="r" style="left:1894px;top:500px;width:4px;height:72px;background:#f0a64e"></div>
<div class="r" style="left:2186px;top:500px;width:4px;height:72px;background:#f0a64e"></div>
<div class="r" style="left:1902px;top:508px;width:76px;height:36px;background:#777;border-left:4px solid #555;border-radius:6px;box-sizing:border-box"></div>
<div class="t" style="left:1914.5px;top:517.91px;font-size:17px;line-height:17px;color:#fff;font-weight:400;-webkit-text-stroke:0.3px #fff;letter-spacing:0.6px">2:John</div>
<div class="r" style="left:2194px;top:508px;width:72px;height:36px;background:#777;border-left:4px solid #555;border-radius:6px;box-sizing:border-box"></div>
<div class="t" style="left:2206.5px;top:517.91px;font-size:17px;line-height:17px;color:#fff;font-weight:400;-webkit-text-stroke:0.3px #fff;letter-spacing:0.6px">1:Jony</div>
<div class="r" style="left:726px;top:446px;width:4px;height:126px;background:#d0493e"></div>
<div class="r" style="left:1018px;top:574px;width:4px;height:72px;background:#d0493e"></div>
<div class="r" style="left:1600px;top:500px;width:2.5px;height:72px;background:#1b9a2a"></div>
<div class="r" style="left:1896px;top:870px;width:4px;height:72px;background:#d0493e"></div>
<div class="r" style="left:2480px;top:1166px;width:4px;height:72px;background:#d0493e"></div>
</div></body></html>
